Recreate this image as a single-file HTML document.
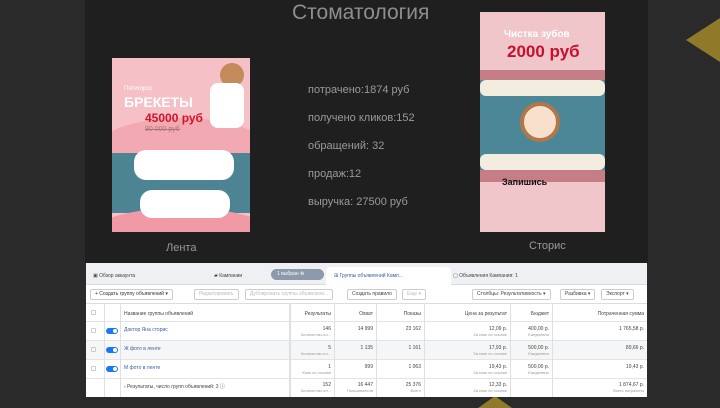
<!DOCTYPE html><html><head><meta charset="utf-8"><style>
*{margin:0;padding:0;box-sizing:border-box}
body{width:720px;height:405px;background:#2a2a2a;position:relative;overflow:hidden;font-family:"Liberation Sans","DejaVu Sans",sans-serif}
.panel{position:absolute;left:85px;top:0;width:563px;height:263px;background:#1f1f1f}
.t{position:absolute;color:#9a9a9a}
.st{position:absolute;left:308px;font-size:11px;color:#9a9a9a}
.tb{position:absolute;left:86px;top:263px;width:561px;height:134px;background:#fff;font-size:5px;color:#444}
.a{position:absolute}
.row{position:absolute;left:0;width:561px;border-bottom:1px solid #e4e4e4}
.c{position:absolute;text-align:right}
.btn{position:absolute;top:26px;height:11px;border:1px solid #ccc;border-radius:2px;background:#fff;font-size:5px;line-height:9px;padding:0 4px}
.tog{position:absolute;left:20px;width:12px;height:6px;border-radius:3px;background:#1877f2}
.tog:after{content:"";position:absolute;right:1px;top:1px;width:4px;height:4px;border-radius:50%;background:#fff}
.cb{position:absolute;left:5px;width:5px;height:5px;border:1px solid #ccc;border-radius:1px}
.s{color:#999;font-size:4px}
.v{position:absolute;top:40px;width:1px;height:94px;background:#e0e0e0}
</style></head><body>
<div class="panel"></div>
<div class="t" style="left:292px;top:1px;font-size:21px;color:#8e8e8e">Стоматология</div>
<!-- left ad -->
<div class="a" style="left:112px;top:58px;width:138px;height:174px;background:#f6c1c6;overflow:hidden">
 <div class="a" style="left:-20px;top:60px;width:180px;height:70px;border-radius:50%;background:#f3a9b1"></div>
 <div class="a" style="left:0;top:95px;width:138px;height:60px;background:#4d8494"></div>
 <div class="a" style="left:-20px;top:150px;width:180px;height:50px;border-radius:50%;background:#f19aa6"></div>
 <div class="a" style="left:22px;top:92px;width:100px;height:30px;border-radius:12px;background:#fff"></div>
 <div class="a" style="left:28px;top:132px;width:90px;height:28px;border-radius:12px;background:#fff"></div>
 <div class="a" style="left:12px;top:28px;color:#fff;font-size:6px">Пятигорск</div>
 <div class="a" style="left:12px;top:36px;color:#fff;font-size:14px;font-weight:bold">БРЕКЕТЫ</div>
 <div class="a" style="left:33px;top:53px;color:#d0142a;font-size:12px;font-weight:bold">45000 руб</div>
 <div class="a" style="left:33px;top:68px;color:#a77;font-size:7px;text-decoration:line-through">90 000 руб</div>
 <div class="a" style="left:108px;top:5px;width:24px;height:24px;border-radius:50%;background:#c38a5a"></div>
 <div class="a" style="left:98px;top:25px;width:34px;height:45px;border-radius:8px;background:#fff"></div>
</div>
<!-- right ad -->
<div class="a" style="left:480px;top:12px;width:125px;height:220px;background:#f0c6cb;overflow:hidden">
 <div class="a" style="left:0;top:58px;width:125px;height:12px;background:#c57d86"></div>
 <div class="a" style="left:0;top:68px;width:125px;height:90px;background:#4b8797"></div>
 <div class="a" style="left:0;top:68px;width:125px;height:16px;background:#f3ede0;border-radius:6px"></div>
 <div class="a" style="left:0;top:142px;width:125px;height:16px;background:#f3ede0;border-radius:6px"></div>
 <div class="a" style="left:0;top:158px;width:125px;height:12px;background:#c57d86"></div>
 <div class="a" style="left:40px;top:90px;width:40px;height:40px;border-radius:50%;background:#f8e0cc;border:4px solid #b0774b"></div>
 <div class="a" style="left:24px;top:17px;color:#fff;font-size:10px;font-weight:bold">Чистка зубов</div>
 <div class="a" style="left:27px;top:30px;color:#c8102e;font-size:17px;font-weight:bold">2000 руб</div>
 <div class="a" style="left:22px;top:165px;color:#111;font-size:9px;font-weight:bold">Запишись</div>
</div>
<div class="st" style="top:84px">потрачено:1874 руб</div>
<div class="st" style="top:112px">получено кликов:152</div>
<div class="st" style="top:140px">обращений: 32</div>
<div class="st" style="top:168px">продаж:12</div>
<div class="st" style="top:196px">выручка: 27500 руб</div>
<div class="t" style="left:166px;top:242px;font-size:11px">Лента</div>
<div class="t" style="left:529px;top:240px;font-size:11px">Сторис</div>
<div class="a" style="left:686px;top:18px;width:0;height:0;border-top:22px solid transparent;border-bottom:22px solid transparent;border-right:34px solid #8f7a2a"></div>
<div class="a" style="left:478px;top:396px;width:0;height:0;border-left:17px solid transparent;border-right:17px solid transparent;border-bottom:12px solid #8f7a2a"></div>
<!-- table -->
<div class="tb">
 <div class="a" style="left:0;top:0;width:561px;height:22px;background:#eef0f3;border-bottom:1px solid #dcdcdc"></div>
 <div class="a" style="left:240px;top:4px;width:125px;height:19px;background:#fff;border-radius:4px 4px 0 0"></div>
 <div class="a" style="left:7px;top:10px">▣ Обзор аккаунта</div>
 <div class="a" style="left:128px;top:10px">▰ Кампании</div>
 <div class="a" style="left:185px;top:6px;width:53px;height:11px;border-radius:6px;background:#8c9aab;color:#fff;line-height:11px;padding-left:6px">1 выбран ⊗</div>
 <div class="a" style="left:248px;top:10px;color:#3b5ba8">⊞ Группы объявлений Камп...</div>
 <div class="a" style="left:367px;top:10px">▢ Объявления Кампания: 1</div>
 <div class="btn" style="left:4px;color:#333">+ Создать группу объявлений ▾</div>
 <div class="btn" style="left:108px;color:#bbb">Редактировать</div>
 <div class="btn" style="left:159px;color:#bbb">Дублировать группы объявлени...</div>
 <div class="btn" style="left:261px">Создать правило</div>
 <div class="btn" style="left:316px;color:#bbb">Еще ▾</div>
 <div class="btn" style="left:386px">Столбцы: Результативность ▾</div>
 <div class="btn" style="left:474px">Разбивка ▾</div>
 <div class="btn" style="left:515px">Экспорт ▾</div>
 <div class="row" style="top:40px;height:19px;background:#fff;border-top:1px solid #ddd"></div>
 <div class="row" style="top:59px;height:19px;background:#fff"></div>
 <div class="row" style="top:78px;height:19px;background:#f5f6f7"></div>
 <div class="row" style="top:97px;height:19px;background:#fff"></div>
 <div class="row" style="top:116px;height:18px;background:#fff;border:0"></div>
 <div class="v" style="left:18px"></div><div class="v" style="left:34px"></div><div class="v" style="left:203px;width:2px"></div>
 <div class="v" style="left:248px"></div><div class="v" style="left:290px"></div><div class="v" style="left:338px"></div><div class="v" style="left:424px"></div><div class="v" style="left:466px"></div>
 <div class="cb" style="top:47px"></div><div class="cb" style="top:65px"></div><div class="cb" style="top:84px"></div><div class="cb" style="top:103px"></div>
 <div class="tog" style="top:65px"></div><div class="tog" style="top:84px"></div><div class="tog" style="top:103px"></div>
 <div class="a" style="left:38px;top:48px">Название группы объявлений</div>
 <div class="c" style="left:205px;width:40px;top:48px">Результаты</div>
 <div class="c" style="left:250px;width:37px;top:48px">Охват</div>
 <div class="c" style="left:292px;width:43px;top:48px">Показы</div>
 <div class="c" style="left:340px;width:81px;top:48px">Цена за результат</div>
 <div class="c" style="left:426px;width:37px;top:48px">Бюджет</div>
 <div class="c" style="left:468px;width:90px;top:48px">Потраченная сумма</div>
 <div class="a" style="left:38px;top:64px;color:#3b5ba8">Доктор Яна сторис</div>
 <div class="a" style="left:38px;top:83px;color:#3b5ba8">Ж фото в ленте</div>
 <div class="a" style="left:38px;top:102px;color:#3b5ba8">М фото в ленте</div>
 <div class="a" style="left:38px;top:120px">› Результаты, число групп объявлений: 3 ⓘ</div>
 <div class="c" style="left:205px;width:40px;top:63px">146<br><span class="s">Количество кл...</span></div>
 <div class="c" style="left:205px;width:40px;top:82px">5<br><span class="s">Количество кл...</span></div>
 <div class="c" style="left:205px;width:40px;top:101px">1<br><span class="s">Клик по ссылке</span></div>
 <div class="c" style="left:205px;width:40px;top:119px">152<br><span class="s">Количество кл...</span></div>
 <div class="c" style="left:250px;width:37px;top:63px">14 999</div>
 <div class="c" style="left:250px;width:37px;top:82px">1 135</div>
 <div class="c" style="left:250px;width:37px;top:101px">999</div>
 <div class="c" style="left:250px;width:37px;top:119px">16 447<br><span class="s">Пользователи</span></div>
 <div class="c" style="left:292px;width:43px;top:63px">23 162</div>
 <div class="c" style="left:292px;width:43px;top:82px">1 161</div>
 <div class="c" style="left:292px;width:43px;top:101px">1 063</div>
 <div class="c" style="left:292px;width:43px;top:119px">25 376<br><span class="s">Всего</span></div>
 <div class="c" style="left:340px;width:81px;top:63px">12,09 р.<br><span class="s">За клик по ссылке</span></div>
 <div class="c" style="left:340px;width:81px;top:82px">17,93 р.<br><span class="s">За клик по ссылке</span></div>
 <div class="c" style="left:340px;width:81px;top:101px">19,43 р.<br><span class="s">За клик по ссылке</span></div>
 <div class="c" style="left:340px;width:81px;top:119px">12,33 р.<br><span class="s">За клик по ссылке</span></div>
 <div class="c" style="left:426px;width:37px;top:63px">400,00 р.<br><span class="s">Ежедневно</span></div>
 <div class="c" style="left:426px;width:37px;top:82px">500,00 р.<br><span class="s">Ежедневно</span></div>
 <div class="c" style="left:426px;width:37px;top:101px">500,00 р.<br><span class="s">Ежедневно</span></div>
 <div class="c" style="left:468px;width:90px;top:63px">1 765,58 р.</div>
 <div class="c" style="left:468px;width:90px;top:82px">89,66 р.</div>
 <div class="c" style="left:468px;width:90px;top:101px">19,43 р.</div>
 <div class="c" style="left:468px;width:90px;top:119px">1 874,67 р.<br><span class="s">Всего потрачено</span></div>
</div>
</body></html>
